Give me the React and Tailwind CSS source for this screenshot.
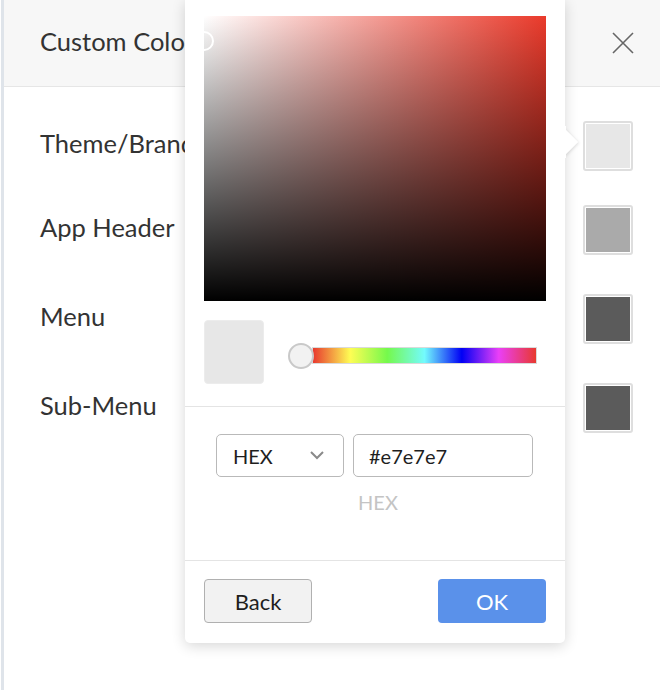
import React from "react";

const rows = [
  { label: "Theme/Brand", color: "#e7e7e7", mt: "mt-[34px]" },
  { label: "App Header", color: "#aaaaaa", mt: "mt-[34px]" },
  { label: "Menu", color: "#5b5b5b", mt: "mt-[39px]" },
  { label: "Sub-Menu", color: "#5b5b5b", mt: "mt-[39px]" },
];

// swatch with the thin white ring inside a grey frame
const Swatch = ({ color }) => (
  <div className="w-[50px] h-[50px] rounded-[3px] border-2 border-[#dedede] p-px bg-white">
    <div className="w-full h-full" style={{ backgroundColor: color }} />
  </div>
);

const ColorPicker = () => {
  return (
    <div className="absolute left-[185px] top-0 w-[380px] h-[643px] bg-white rounded-b-[5px] shadow-[0_3px_14px_rgba(0,0,0,0.16)]">
      {/* arrow towards the swatch */}
      <svg className="absolute left-[379px] top-[126px]" width="18" height="32" viewBox="0 0 18 32">
        <defs>
          <filter id="arrowShadow" x="-50%" y="-50%" width="200%" height="200%">
            <feDropShadow dx="1" dy="1" stdDeviation="1.5" floodColor="#000" floodOpacity="0.12" />
          </filter>
        </defs>
        <path d="M0 2 L14 16 L0 30 Z" fill="#fff" filter="url(#arrowShadow)" />
        <rect x="0" y="0" width="2" height="32" fill="#fff" />
      </svg>

      <div className="pt-[16px] px-[19px]">
        {/* saturation / value area */}
        <div className="relative w-[342px] h-[285px] bg-[linear-gradient(to_right,#ffffff,#ea3a2b)]">
          <div className="absolute inset-0 bg-[linear-gradient(to_top,#000000,rgba(0,0,0,0))]" />
          <div className="absolute left-[-10px] top-[15px] w-[20px] h-[20px] rounded-full border-2 border-white" />
        </div>

        <div className="flex items-center mt-[19px]">
          <div className="w-[60px] h-[64px] rounded-[4px] border border-[#ececec] bg-[#e7e7e7]" />
          <div className="relative ml-[48px] mt-[7px] w-[225px] h-[17px] border border-[#dadada] bg-[linear-gradient(to_right,#e8392f_0%,#fefd54_16.7%,#75f94c_33.3%,#73fbfd_50%,#0000f5_66.7%,#ea3ff7_83.3%,#e8392f_100%)]">
            <div className="absolute left-[-25px] top-[-5px] w-[26px] h-[26px] rounded-full bg-[#f2f2f2] border-2 border-[#c9c9c9]" />
          </div>
        </div>
      </div>

      <div className="mt-[22px] border-t border-[#e4e4e4] h-[154px]">
        <div className="flex gap-[9px] pt-[27px] pl-[31px]">
          <div className="flex items-center justify-between w-[128px] h-[43px] rounded-[5px] border border-[#b9b9b9] pl-[16px] pr-[19px] text-[20px] text-[#1e1e1e]">
            <span>HEX</span>
            <svg width="14" height="9" viewBox="0 0 14 9" fill="none">
              <path d="M1 1 L7 7 L13 1" stroke="#8a8a8a" strokeWidth="2" />
            </svg>
          </div>
          <div className="flex items-center w-[180px] h-[43px] rounded-[5px] border border-[#b9b9b9] pl-[15px] text-[20px] text-[#1e1e1e]">
            #e7e7e7
          </div>
        </div>
        <div className="text-center text-[20px] text-[#c4c4c4] mt-[13px] pl-[6px] leading-[24px]">HEX</div>
      </div>

      <div className="border-t border-[#e4e4e4] flex justify-between px-[19px] pt-[18px]">
        <button className="w-[108px] h-[44px] rounded-[4px] border border-[#b0b0b0] bg-[#f2f2f2] text-[22px] text-[#1e1e1e]">
          Back
        </button>
        <button className="w-[108px] h-[44px] rounded-[4px] bg-[#5a91ea] text-[22px] text-white">
          OK
        </button>
      </div>
    </div>
  );
};

export default function App() {
  return (
    <div className="relative w-[660px] h-[690px] bg-white overflow-hidden font-['Lato',sans-serif]">
      <div className="ml-[1px] h-full border-l-[3px] border-[#dfe4ea]">
        <div className="h-[87px] bg-[#f7f7f7] border-b border-[#e6e6e6] flex items-center justify-between pl-[36px] pr-[26px]">
          <h1 className="text-[25.5px] text-[#333] mb-[4px]">Custom Colors</h1>
          <svg width="22" height="22" viewBox="0 0 22 22" fill="none">
            <path d="M1 1 L21 21 M21 1 L1 21" stroke="#666" strokeWidth="1.6" />
          </svg>
        </div>
        <div className="pl-[36px] pr-[27px]">
          {rows.map((row) => (
            <div key={row.label} className={`flex items-center justify-between h-[50px] ${row.mt}`}>
              <span className="text-[25.5px] text-[#333] mb-[5px]">{row.label}</span>
              <Swatch color={row.color} />
            </div>
          ))}
        </div>
      </div>
      <ColorPicker />
    </div>
  );
}
